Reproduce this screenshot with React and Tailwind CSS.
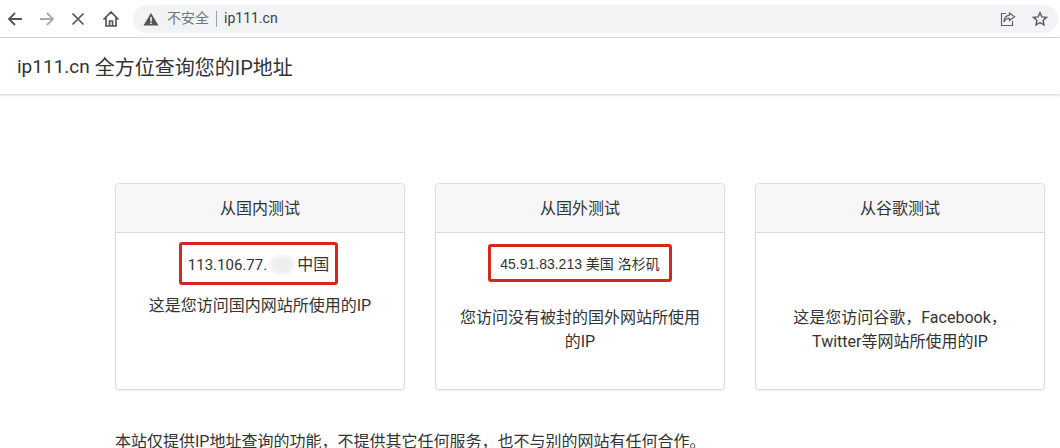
const FONT = "font-['Roboto','Noto_Sans_CJK_SC',sans-serif]";

function Toolbar() {
  return (
    <div className="flex h-[38px] items-center border-b border-[#dadce0] bg-white">
      <div className="flex w-[133px] shrink-0 items-center">
        <svg className="ml-[6px]" width="18" height="18" viewBox="0 0 18 18" fill="none" stroke="#555" strokeWidth="1.8">
          <path d="M16 9H3M9 3L3 9l6 6" />
        </svg>
        <svg className="ml-[14px]" width="18" height="18" viewBox="0 0 18 18" fill="none" stroke="#aaa" strokeWidth="1.8">
          <path d="M2 9h13M9 3l6 6-6 6" />
        </svg>
        <svg className="ml-[15px]" width="14" height="14" viewBox="0 0 14 14" fill="none" stroke="#555" strokeWidth="1.7">
          <path d="M1.5 1.5l11 11M12.5 1.5l-11 11" />
        </svg>
        <svg className="ml-[17px]" width="18" height="18" viewBox="0 0 18 18" fill="none" stroke="#555" strokeWidth="1.7">
          <path d="M1.5 9.5L9 2l7.5 7.5M4 7.5V16h10V7.5M7.5 16v-5h3v5" />
        </svg>
      </div>
      <div className="flex h-7 w-[925px] items-center rounded-full bg-[#f1f3f4] pl-[10px] pr-[10px]">
        <svg width="16" height="14" viewBox="0 0 16 14">
          <path d="M8 1L15.5 13.5H.5z" fill="#555" />
          <path d="M7.2 5h1.6v4.5H7.2zM7.2 10.4h1.6v1.6H7.2z" fill="#f1f3f4" />
        </svg>
        <span className="ml-[8px] text-[14px] text-[#70757a]">不安全</span>
        <span className="mx-[7px] h-4 w-px bg-[#9aa0a6]" />
        <span className="text-[14px] text-[#3c4043]">ip111.cn</span>
        <svg className="ml-auto" width="16" height="16" viewBox="0 0 16 16" fill="none" stroke="#5f6368" strokeWidth="1.2">
          <path d="M6 2.5H1.5v12h11V10" />
          <path d="M9.5 2l5 3.8-5 3.8V7.4C7 7.4 5 8.5 4 11c0-3.5 2-6.2 5.5-6.8z" />
        </svg>
        <svg className="ml-[16px]" width="16" height="16" viewBox="0 0 16 16" fill="none" stroke="#5f6368" strokeWidth="1.5">
          <path d="M8 1.8l1.9 4.1 4.5.5-3.3 3 .9 4.4L8 11.6l-4 2.2.9-4.4-3.3-3 4.5-.5z" />
        </svg>
      </div>
    </div>
  );
}

function Card({ title, ip, hint }) {
  return (
    <div className="h-[207px] w-[290px] overflow-hidden rounded-[4px] border border-[#dcdcdc] shadow-[0_1px_2px_rgba(0,0,0,0.08)]">
      <div className="flex h-[49px] items-center justify-center border-b border-[#dcdcdc] bg-[#f7f7f7] pt-[2px] text-[16px] text-[#333]">
        {title}
      </div>
      <div className="flex flex-col items-center px-3 text-center text-[16px] leading-6 text-[#333]">
        {ip}
        {hint}
      </div>
    </div>
  );
}

export default function App() {
  return (
    <div className={`h-[448px] w-[1060px] overflow-hidden bg-white ${FONT}`}>
      <Toolbar />
      <div className="flex h-[56px] items-center bg-white pl-[17px] pt-[3px] text-[20px] text-[#333] shadow-[0_1px_3px_rgba(0,0,0,0.2)]">
        <span className="mr-[5px] text-[19px]">ip111.cn</span>全方位查询您的IP地址
      </div>
      <div className="ml-[115px] mt-[89px] flex gap-[30px]">
        <Card
          title="从国内测试"
          ip={
            <div className="mr-[3px] mt-[9px] flex h-[43px] w-[159px] items-center justify-center rounded-[3px] border-[3px] border-[#d3291d] pt-[3px]">
              <span className="text-[15px]">113.106.77.</span>
              <span className="mx-[3px] h-[18px] w-[24px] rounded-full bg-[#eeeeee] blur-[2px]" />
              中国
            </div>
          }
          hint={<p className="mt-[9px]">这是您访问国内网站所使用的IP</p>}
        />
        <Card
          title="从国外测试"
          ip={
            <div className="mt-[11px] flex h-[38px] w-[184px] items-center justify-center rounded-[3px] border-[3px] border-[#d3291d] pt-[2px] font-['Liberation_Sans','Noto_Sans_CJK_SC',sans-serif] text-[14px]">
              45.91.83.213 美国 洛杉矶
            </div>
          }
          hint={<p className="mt-[24px] w-[250px]">您访问没有被封的国外网站所使用的IP</p>}
        />
        <Card
          title="从谷歌测试"
          hint={<p className="mt-[73px] w-[220px]">这是您访问谷歌，Facebook，Twitter等网站所使用的IP</p>}
        />
      </div>
      <p className="ml-[115px] mt-[40px] text-[16px] leading-6 text-[#333]">
        本站仅提供IP地址查询的功能，不提供其它任何服务，也不与别的网站有任何合作。
      </p>
    </div>
  );
}
